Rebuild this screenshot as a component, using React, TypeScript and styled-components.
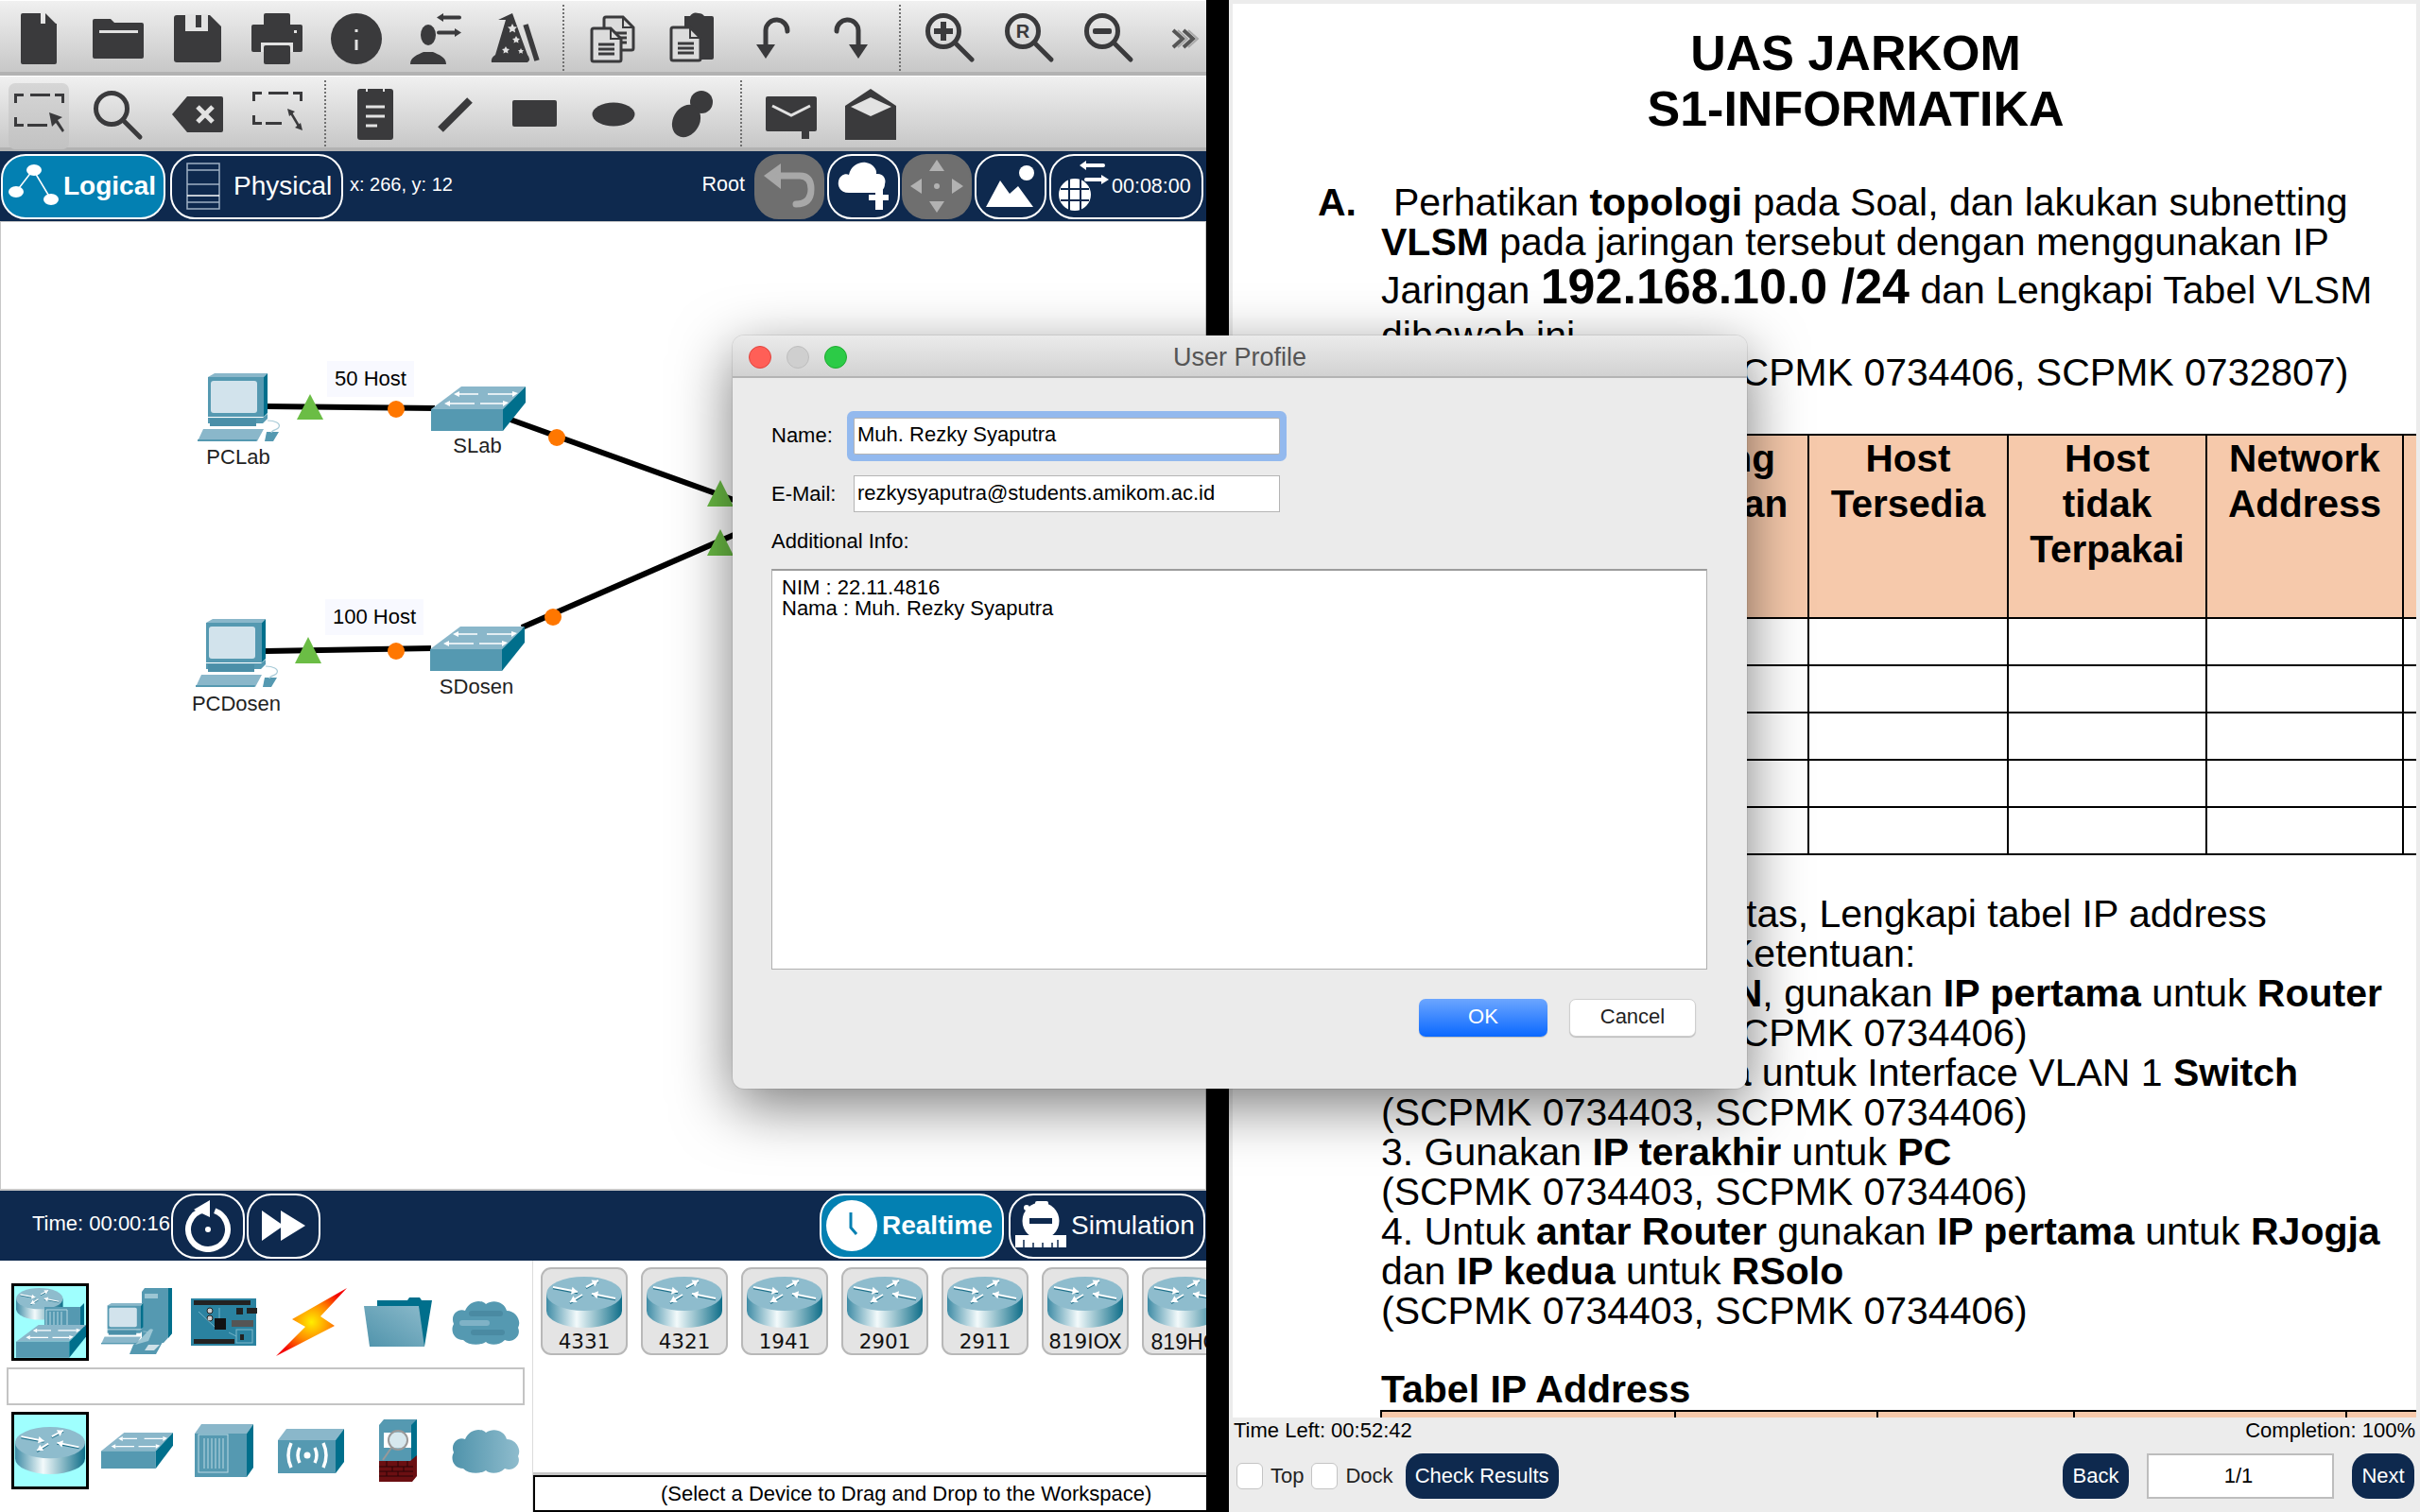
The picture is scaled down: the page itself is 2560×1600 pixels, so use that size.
import React from 'react';
import styled, { createGlobalStyle } from 'styled-components';

const INK = '#3a3a3c';
const PALE = '#e2e2e2';
const NAVY = '#0e294e';
const ACTIVE = '#0380b2';
const TEAL_TOP = '#8ab7ca';
const TEAL_FRONT = '#5599b1';
const TEAL_SIDE = '#006f8c';

const GlobalStyle = createGlobalStyle`
  html, body {
    margin: 0;
    padding: 0;
    background: #000;
    overflow: hidden;
  }
  * { box-sizing: border-box; }
  body {
    font-family: "Liberation Sans", Arial, sans-serif;
  }
`;

const Screen = styled.div`
  position: relative;
  width: 2560px;
  height: 1600px;
  display: grid;
  grid-template-columns: 1276px 24px 1260px;
  background: #000;
  overflow: hidden;
`;

const PacketTracer = styled.div`
  grid-column: 1;
  display: flex;
  flex-direction: column;
  height: 1600px;
  background: #fff;
`;

const SharedDefs = styled.svg`
  display: block;
  flex: none;
`;

const Toolbar = styled.div`
  height: 80px;
  flex: none;
  padding-top: 4px;
  display: flex;
  background: linear-gradient(#f0f0f0, #c7c7c7);
  border-bottom: 3px solid #b2b2b2;
  box-shadow: inset 0 -1px 0 #b2b2b2;
  border-top: 1px solid #fff;
  & > :first-child { margin-left: -1px; }
`;

const Slot = styled.div<{ $width?: number }>`
  width: ${(p) => p.$width ?? 84}px;
  flex: none;
  display: flex;
  align-items: center;
  justify-content: center;
  svg { display: block; }
`;

const Pressed = styled.div`
  width: 64px;
  height: 70px;
  margin-top: 4px;
  display: flex;
  align-items: center;
  justify-content: center;
  border-radius: 7px;
  background: linear-gradient(#d6d6d6, #c2c2c2);
`;

const Divider = styled.div`
  width: 20px;
  flex: none;
  margin-bottom: 2px;
  &::before {
    content: '';
    display: block;
    width: 0;
    height: 100%;
    margin-left: 8px;
    border-left: 2px dotted #707070;
  }
`;

const NavBar = styled.div`
  height: 74px;
  flex: none;
  display: flex;
  align-items: center;
  background: ${NAVY};
  color: #fff;
  font-size: 21.5px;
`;

const NavButton = styled.div<{ $width: number; $active?: boolean; $disabled?: boolean; $pad?: number; $gap?: number }>`
  width: ${(p) => p.$width}px;
  height: 69px;
  flex: none;
  display: flex;
  align-items: center;
  justify-content: ${(p) => (p.$pad === undefined ? 'center' : 'flex-start')};
  gap: ${(p) => p.$gap ?? 0}px;
  padding-left: ${(p) => p.$pad ?? 0}px;
  border-radius: 26px;
  border: 2px solid ${(p) => (p.$disabled ? '#6f6f6f' : '#fff')};
  background: ${(p) => (p.$disabled ? '#6f6f6f' : p.$active ? ACTIVE : 'transparent')};
  font-size: ${(p) => (p.$pad === undefined ? '21.5px' : '28px')};
  font-weight: ${(p) => (p.$active ? 700 : 400)};
  svg { display: block; flex: none; }
`;

const ClockText = styled.span`
  font-size: 21.5px;
`;

const Coords = styled.span`
  font-size: 20px;
  margin-top: -3px;
`;

const RootLabel = styled.span`
  font-size: 21.5px;
  margin-top: -3px;
`;

const TimeText = styled.span`
  font-size: 22px;
  margin-top: -4px;
`;

const Gap = styled.div<{ $w: number }>`
  width: ${(p) => p.$w}px;
  flex: none;
`;

const Grow = styled.div`
  flex: 1;
`;

const Workspace = styled.div`
  position: relative;
  flex: 1;
  background: #fff;
  border: 1px solid #c8c8c8;
  border-bottom-width: 2px;
  overflow: hidden;
`;

const Wires = styled.svg`
  position: absolute;
  left: -1px;
  top: -235px;
`;

const Caption = styled.span<{ $x: number; $y: number }>`
  position: absolute;
  left: ${(p) => p.$x - 1}px;
  top: ${(p) => p.$y - 235}px;
  transform: translate(-50%, -50%);
  font-size: 22px;
  line-height: 24px;
  color: #222;
  white-space: nowrap;
`;

const Note = styled.span<{ $x: number; $y: number; $w: number }>`
  position: absolute;
  left: ${(p) => p.$x - 1}px;
  top: ${(p) => p.$y - 235}px;
  width: ${(p) => p.$w}px;
  height: 38px;
  display: flex;
  align-items: center;
  justify-content: center;
  background: #f8f9ff;
  font-size: 22px;
  color: #000;
`;

const Tray = styled.div`
  height: 266px;
  flex: none;
  display: grid;
  grid-template-columns: 563px 713px;
  min-height: 0;
`;

const TypePanel = styled.div`
  padding-top: 24px;
`;

const TypeRow = styled.div`
  height: 82px;
  margin-left: 7px;
  display: grid;
  grid-template-columns: repeat(6, 92px);
  align-items: center;
  justify-items: center;
  svg { display: block; }
`;

const TypeCell = styled.div<{ $selected?: boolean }>`
  width: ${(p) => (p.$selected ? '82px' : 'auto')};
  height: ${(p) => (p.$selected ? '82px' : 'auto')};
  display: flex;
  align-items: center;
  justify-content: center;
  background: ${(p) => (p.$selected ? '#9ffffe' : 'transparent')};
  border: ${(p) => (p.$selected ? '3px solid #000' : '0')};
`;

const SearchBox = styled.div`
  height: 40px;
  margin: 7px 8px 7px 7px;
  border: 2px solid #c4c4c4;
  background: #fff;
`;

const ListPanel = styled.div`
  display: flex;
  flex-direction: column;
  min-width: 0;
  height: 266px;
  border-left: 1px solid #dcdcdc;
`;

const CardStrip = styled.div`
  flex: 1;
  display: flex;
  gap: 14px;
  padding: 7px 0 0 8px;
  overflow: hidden;
  border-bottom: 3px solid #c6c6c6;
`;

const Card = styled.div`
  width: 92px;
  height: 93px;
  flex: none;
  padding-top: 8px;
  display: flex;
  flex-direction: column;
  align-items: center;
  background: #e4e4e4;
  border: 2px solid #b8b8b8;
  border-radius: 11px;
  svg { display: block; flex: none; }
`;

const CardName = styled.span<{ $plain?: boolean }>`
  margin-top: 2px;
  font-family: ${(p) => (p.$plain ? '"Liberation Sans"' : '"DejaVu Sans"')}, sans-serif;
  font-size: ${(p) => (p.$plain ? '23px' : '21.5px')};
  line-height: 26px;
  color: #111;
  white-space: nowrap;
`;

const Hint = styled.div`
  height: 39px;
  flex: none;
  padding-left: 133px;
  display: flex;
  align-items: center;
  border: 2px solid #000;
  border-right: 0;
  font-size: 22px;
  color: #000;
  white-space: nowrap;
`;

const Assessment = styled.div`
  grid-column: 3;
  display: flex;
  flex-direction: column;
  height: 1600px;
  padding-top: 4px;
  background: #ececec;
`;

const Doc = styled.div`
  height: 1496px;
  flex: none;
  margin: 0 4px;
  padding: 23px 0 0 90px;
  background: #fff;
  color: #000;
  overflow: hidden;
  font-size: 41px;
  line-height: 42px;
`;

const DocTitle = styled.h1`
  margin: 0;
  padding-right: 24px;
  text-align: center;
  font-size: 52px;
  line-height: 59px;
  font-weight: 700;
`;

const TaskHead = styled.div<{ $top: number }>`
  display: flex;
  margin-top: ${(p) => p.$top}px;
  white-space: nowrap;
`;

const TaskMark = styled.b<{ $width?: number }>`
  width: ${(p) => p.$width ?? 80}px;
  flex: none;
`;

const Para = styled.div`
  margin-left: 67px;
`;

const DocLine = styled.div<{ $tall?: boolean; $top?: number }>`
  white-space: nowrap;
  line-height: ${(p) => (p.$tall ? '53px' : '42px')};
  margin-top: ${(p) => p.$top ?? 0}px;
`;

const Big = styled.b`
  font-size: 52px;
  line-height: 1;
`;

const GridTable = styled.table<{ $width: number; $top: number }>`
  table-layout: fixed;
  width: ${(p) => p.$width}px;
  margin: ${(p) => p.$top}px 0 0 66px;
  border-collapse: collapse;
  td, th {
    border: 2px solid #000;
    padding: 0;
  }
  th {
    height: 194px;
    vertical-align: top;
    background: #f6c9ab;
    font-size: 40.5px;
    line-height: 48px;
    font-weight: 700;
  }
  td { height: 50px; }
`;

const DocFooter = styled.div`
  flex: 1;
  display: flex;
  flex-direction: column;
  padding: 0 5px;
  font-size: 22px;
  color: #000;
`;

const StatusRow = styled.div`
  height: 28px;
  display: flex;
  align-items: center;
  justify-content: space-between;
`;

const ControlRow = styled.div`
  margin-top: 10px;
  display: flex;
  align-items: center;
  height: 48px;
  padding-left: 3px;
`;

const CheckBox = styled.span`
  width: 28px;
  height: 28px;
  flex: none;
  background: #fff;
  border: 1px solid #c4c4c4;
  border-radius: 6px;
`;

const CheckLabel = styled.span`
  margin: 0 8px 0 8px;
  color: #222;
`;

const PillButton = styled.div<{ $width: number }>`
  width: ${(p) => p.$width}px;
  height: 48px;
  flex: none;
  display: flex;
  align-items: center;
  justify-content: center;
  border-radius: 18px;
  background: ${NAVY};
  color: #fff;
`;

const PageBox = styled.div`
  width: 198px;
  height: 48px;
  flex: none;
  margin: 0 19px;
  padding-right: 4px;
  display: flex;
  align-items: center;
  justify-content: center;
  background: #fff;
  border: 2px solid #bdbdbd;
`;

const Dialog = styled.section`
  position: absolute;
  left: 775px;
  top: 355px;
  width: 1073px;
  height: 797px;
  display: flex;
  flex-direction: column;
  background: #ebebeb;
  border-radius: 12px;
  box-shadow: 0 18px 62px rgba(0, 0, 0, 0.52), 0 0 0 1px rgba(0, 0, 0, 0.08);
  font-size: 22px;
  color: #000;
  overflow: hidden;
`;

const TitleBar = styled.header`
  position: relative;
  height: 45px;
  flex: none;
  padding-top: 3px;
  display: flex;
  align-items: center;
  justify-content: center;
  background: linear-gradient(#ebebeb, #d2d2d2);
  border-bottom: 2px solid #b4b4b4;
  color: #555;
  font-size: 27px;
`;

const Lights = styled.div`
  position: absolute;
  left: 17px;
  top: 11px;
  display: flex;
  gap: 16px;
`;

const Light = styled.span<{ $color: string; $edge: string }>`
  width: 24px;
  height: 24px;
  border-radius: 50%;
  background: ${(p) => p.$color};
  border: 1px solid ${(p) => p.$edge};
`;

const DialogBody = styled.div`
  flex: 1;
  padding: 34px 42px 0 41px;
  display: flex;
  flex-direction: column;
`;

const FieldRow = styled.div<{ $height: number; $top?: number }>`
  height: ${(p) => p.$height}px;
  margin-top: ${(p) => p.$top ?? 0}px;
  display: flex;
  align-items: center;
`;

const FieldLabel = styled.span`
  width: 87px;
  flex: none;
`;

const Input = styled.div<{ $focused?: boolean }>`
  width: 451px;
  height: 39px;
  padding: 0 0 2px 3px;
  display: flex;
  align-items: center;
  background: #fff;
  border: 1px solid #b4b4b4;
  white-space: nowrap;
  box-shadow: ${(p) => (p.$focused ? '0 0 0 7px #93b9ee' : 'none')};
  border-radius: ${(p) => (p.$focused ? '2px' : '0')};
`;

const InfoLabel = styled.div`
  margin-top: 19px;
  line-height: 24px;
`;

const TextArea = styled.div`
  height: 424px;
  margin-top: 17px;
  padding: 7px 10px;
  background: #fff;
  border: 1px solid #b0b0b0;
  border-top: 2px solid #9c9c9c;
  line-height: 22px;
`;

const DialogActions = styled.div`
  margin-top: 31px;
  padding-right: 12px;
  display: flex;
  justify-content: flex-end;
  gap: 23px;
`;

const DialogButton = styled.div<{ $primary?: boolean }>`
  width: ${(p) => (p.$primary ? '136px' : '134px')};
  height: 40px;
  padding-bottom: 3px;
  display: flex;
  align-items: center;
  justify-content: center;
  border-radius: 7px;
  background: ${(p) => (p.$primary ? 'linear-gradient(#6ca6ff, #0a68ff)' : '#fff')};
  color: ${(p) => (p.$primary ? '#fff' : '#222')};
  border: ${(p) => (p.$primary ? '0' : '1px solid #cfcfcf')};
  box-shadow: 0 1px 1px rgba(0, 0, 0, 0.2);
`;

/* toolbar glyphs: 60x60 box centred in each 84px slot */
const G = ({ children }: { children: React.ReactNode }) => (
  <svg width="60" height="60" viewBox="0 0 60 60" fill={INK}>{children}</svg>
);

const lens = (cx = 23, cy = 22) => (
  <>
    <circle cx={cx} cy={cy} r="16.5" fill="none" stroke={INK} strokeWidth="5" />
    <path d={`M${cx + 12} ${cy + 12} L${cx + 30} ${cy + 30}`} stroke={INK} strokeWidth="5" strokeLinecap="round" />
  </>
);

const sheet = (x: number, y: number) => (
  <g transform={`translate(${x} ${y})`}>
    <path d="M2 0H20L31 11V33a2 2 0 0 1-2 2H2a2 2 0 0 1-2-2V2a2 2 0 0 1 2-2z" fill="#dcdcdc" stroke={INK} strokeWidth="3" />
    <path d="M20 1V11H30" fill="none" stroke={INK} strokeWidth="2" />
    <path d="M7 17H24M7 22H24M7 27H24" stroke={INK} strokeWidth="3" />
  </g>
);

const corners = (
  <path d="M4 6H14V9H7V16H4zM21 6H42V9H21zM47 6H57V16H54V9H47zM4 31H7V38H14V41H4zM18 38H39V41H18z" />
);

const toolbarOne: React.ReactNode[][] = [
  [
    <G key="new"><path d="M13 3H32V14H49V55a2 2 0 0 1-2 2H13a2 2 0 0 1-2-2V5a2 2 0 0 1 2-2z" /><path d="M37 3L48 14H37z" /></G>,
    <G key="open"><path d="M5 9H22L26 13H55a2 2 0 0 1 2 2V49a2 2 0 0 1-2 2H5a2 2 0 0 1-2-2V11a2 2 0 0 1 2-2z" /><rect x="10" y="21" width="41" height="3" fill={PALE} /></G>,
    <G key="save"><path d="M8 5H43L55 17V52a3 3 0 0 1-3 3H8a3 3 0 0 1-3-3V8a3 3 0 0 1 3-3z" /><rect x="17" y="4" width="24" height="18" fill={PALE} /><rect x="28" y="5" width="6" height="13" /></G>,
    <G key="print"><rect x="16" y="3" width="28" height="20" rx="2" /><rect x="3" y="15" width="54" height="29" rx="2" /><rect x="13" y="34" width="34" height="10" fill={PALE} /><rect x="16" y="37" width="28" height="20" rx="2" /><rect x="48" y="21" width="3" height="3" fill={PALE} /></G>,
    <G key="info"><circle cx="30" cy="30" r="27" /><rect x="28.5" y="20" width="3" height="3" fill={PALE} /><rect x="28.5" y="31" width="3" height="11" fill={PALE} /></G>,
    <G key="profile"><ellipse cx="22" cy="26" rx="8" ry="11" /><path d="M3 57C3 49 11 47 17 44H27C33 47 41 49 41 57z" /><rect x="36" y="5.5" width="21" height="4" rx="2" /><path d="M31 7.5L38 3V12z" /><rect x="31" y="21.5" width="21" height="4" rx="2" /><path d="M57 23.5L50 19V28z" /></G>,
    <G key="wizard"><path d="M27 3L12 10L20 10L9 47Q4 50 5 55H43Q47 52 43 47z" /><path d="M41 15L53 53" stroke={INK} strokeWidth="5.5" /><path d="M27 14l1.6 3.2 3.4.4-2.5 2.4.6 3.4-3.1-1.6-3.1 1.6.6-3.4-2.5-2.4 3.4-.4zM31 27l1.3 2.6 2.7.3-2 2 .5 2.7-2.5-1.3-2.5 1.3.5-2.7-2-2 2.7-.3zM20 38l1.3 2.6 2.7.3-2 2 .5 2.7-2.5-1.3-2.5 1.3.5-2.7-2-2 2.7-.3zM36 40l1 2 2 .3-1.5 1.4.4 2-1.9-1-1.9 1 .4-2-1.5-1.4 2-.3z" fill={PALE} /></G>,
  ],
  [
    <G key="copy">{sheet(20, 7)}{sheet(7, 19)}</G>,
    <G key="paste"><path d="M21 6H27Q30 1 36 3Q40 3 42 6H50a2 2 0 0 1 2 2V50a2 2 0 0 1-2 2H21z" />{sheet(7, 18)}</G>,
    <G key="undo"><path d="M23 38V21a11.5 11.5 0 0 1 23 1" fill="none" stroke={INK} strokeWidth="5" strokeLinecap="round" /><path d="M13 36H33L23 51z" /></G>,
    <G key="redo"><path d="M37 38V21a11.5 11.5 0 0 0-23 1" fill="none" stroke={INK} strokeWidth="5" strokeLinecap="round" /><path d="M27 36H47L37 51z" /></G>,
  ],
  [
    <G key="zin">{lens()}<path d="M20 12H26V19H33V25H26V32H20V25H13V19H20z" /></G>,
    <G key="zreset">{lens()}<text x="23" y="29" textAnchor="middle" fontFamily="Liberation Sans" fontWeight="700" fontSize="20">R</text></G>,
    <G key="zout">{lens()}<rect x="13" y="19" width="20" height="6" rx="2" /></G>,
  ],
];

const toolbarTwo: React.ReactNode[][] = [
  [
    <Pressed key="select"><G>{corners}<path d="M41 26L55 31L50 34L57 45L55 47L48 37L44 41z" /></G></Pressed>,
    <G key="inspect">{lens(23, 24)}</G>,
    <G key="delete"><path d="M3 30L19 11H55a2 2 0 0 1 2 2V47a2 2 0 0 1-2 2H19z" /><path d="M30 22L46 38M46 22L30 38" stroke={PALE} strokeWidth="5" /></G>,
    <G key="resize"><path d="M4 6H14V9H7V16H4zM21 6H42V9H21zM47 6H57V16H54V9H47zM4 31H7V38H14V41H4zM18 38H35V41H18z" /><path d="M44 27L54 44" stroke={INK} strokeWidth="2.5" /><path d="M41 24L49 27L43 32zM57 47L49 44L55 39z" /></G>,
  ],
  [
    <G key="note"><rect x="11" y="3" width="38" height="54" rx="3" /><path d="M20 3h2v3h-2zM38 3h2v3h-2z" fill={PALE} /><path d="M20 20.5H40V23.5H20zM20 30.5H40V33.5H20zM20 40.5H32V43.5H20z" fill={PALE} /></G>,
    <G key="line"><path d="M15 46L46 15" stroke={INK} strokeWidth="8" /></G>,
    <G key="rect"><rect x="7" y="15" width="47" height="28" rx="2" /></G>,
    <G key="ellipse"><ellipse cx="30" cy="30" rx="22.5" ry="12.5" /></G>,
    <G key="free"><circle cx="39" cy="17" r="12" /><ellipse cx="23" cy="37" rx="14" ry="18" transform="rotate(30 23 37)" /></G>,
  ],
  [
    <G key="mail"><rect x="3" y="11" width="54" height="37" rx="2" /><rect x="41" y="46" width="8" height="10" /><path d="M10 21L30 31L50 21" fill="none" stroke={PALE} strokeWidth="3" /></G>,
    <G key="mailopen"><path d="M3 21L30 3L57 21V57H3z" /><path d="M9 22L30 12L52 22L30 32z" fill={PALE} /></G>,
  ],
];

const ToolRow = ({ groups, more }: { groups: React.ReactNode[][]; more?: boolean }) => (
  <Toolbar>
    {groups.map((group, i) => (
      <React.Fragment key={i}>
        {i > 0 && <Divider />}
        {group.map((icon, j) => <Slot key={j}>{icon}</Slot>)}
      </React.Fragment>
    ))}
    {more && (
      <Slot $width={78}>
        <svg width="30" height="22" viewBox="0 0 30 22" fill="none" stroke="#555" strokeWidth="4">
          <path d="M2 2L12 11L2 20M13 2L23 11L13 20" />
          <path d="M7 2L17 11L7 20M18 2L28 11L18 20" stroke="#aaa" strokeWidth="2" />
        </svg>
      </Slot>
    )}
  </Toolbar>
);

const Pointer = ({ x1, y1, x2, y2, w = 2, size = 4 }: { x1: number; y1: number; x2: number; y2: number; w?: number; size?: number }) => {
  const a = Math.atan2(y2 - y1, x2 - x1);
  const px = (d: number, s: number) => x2 - Math.cos(a) * d - Math.sin(a) * s;
  const py = (d: number, s: number) => y2 - Math.sin(a) * d + Math.cos(a) * s;
  const head = `${x2},${y2} ${px(size * 1.6, size)},${py(size * 1.6, size)} ${px(size * 1.6, -size)},${py(size * 1.6, -size)}`;
  return (
    <>
      <line x1={x1} y1={y1 + 1.2} x2={x2} y2={y2 + 1.2} stroke="#1d6f89" strokeWidth={w} />
      <line x1={x1} y1={y1} x2={x2} y2={y2} stroke="#fff" strokeWidth={w} />
      <polygon points={head} fill="#fff" />
    </>
  );
};

/* 80x54 */
const RouterShape = () => (
  <g>
    <path d="M0 18V36A40 18 0 0 0 80 36V18z" fill="url(#routerSide)" />
    <ellipse cx="40" cy="18" rx="40" ry="18" fill="#8ebccd" />
    <Pointer x1={7} y1={11} x2={33} y2={16} />
    <Pointer x1={42} y1={11} x2={55} y2={4} />
    <Pointer x1={73} y1={23} x2={48} y2={18} />
    <Pointer x1={38} y1={19} x2={25} y2={27} />
  </g>
);

/* 100x47 */
const SwitchShape = () => (
  <g>
    <path d="M0 24L32 0H100L76 24z" fill={TEAL_TOP} />
    <rect x="0" y="24" width="76" height="23" fill={TEAL_FRONT} />
    <path d="M76 24L100 0V17L76 47z" fill={TEAL_SIDE} />
    <path d="M30 8H50M60 8H86M20 18H46M52 18H76" stroke="#fff" strokeWidth="1.5" />
    <path d="M30 5V11L24 8zM86 5V11L92 7zM20 15V21L14 18zM76 15V21L82 17z" fill="#fff" />
  </g>
);

/* 88x72 */
const PcShape = () => (
  <g>
    <path d="M11 4L18 0H74L70 4z" fill={TEAL_TOP} />
    <rect x="11" y="4" width="59" height="42" fill={TEAL_FRONT} />
    <path d="M70 4L74 0V42L70 46z" fill={TEAL_SIDE} />
    <rect x="14" y="8" width="49" height="34" rx="3" fill="#d2e3ec" />
    <path d="M11 47H69L74 43V48L69 53H11z" fill={TEAL_FRONT} />
    <path d="M13 48H62V56H13z" fill="#4b8fa8" />
    <path d="M6 59H70L63 72H0z" fill={TEAL_TOP} />
    <path d="M0 70H63L62 72H0z" fill={TEAL_FRONT} />
    <path d="M73 62H86L80 72H71z" fill={TEAL_FRONT} />
    <path d="M74 50C82 50 88 53 86 57C85 60 78 60 78 63" fill="none" stroke="#a8cbd8" strokeWidth="1.2" />
  </g>
);

const cloudPath = 'M14 44C4 44 0 34 4 27C0 18 8 10 16 13C20 3 32 0 38 6C46 0 58 4 60 13C70 13 76 24 72 31C76 40 66 48 58 44C52 50 42 50 38 46C32 50 20 50 14 44Z';

const Cable = ({ d }: { d: string }) => <path d={d} stroke="#000" strokeWidth="6" fill="none" />;
const Up = ({ x, top, bottom, fill = '#6bbd45' }: { x: number; top: number; bottom: number; fill?: string }) => (
  <polygon points={`${x},${top} ${x + 14},${bottom} ${x - 14},${bottom}`} fill={fill} />
);
const Dot = ({ x, y }: { x: number; y: number }) => <ellipse cx={x} cy={y} rx="9" ry="9" fill="#ff7700" />;

const NetworkDrawing = () => (
  <Wires width="1276" height="1270" viewBox="0 0 1276 1270">
    <Cable d="M282 430L460 432" />
    <Cable d="M281 689L456 686" />
    <Cable d="M540 444L790 534" />
    <Cable d="M552 664L790 560" />
    <g transform="translate(209 395)"><PcShape /></g>
    <g transform="translate(207 655)"><PcShape /></g>
    <g transform="translate(456 409)"><SwitchShape /></g>
    <g transform="translate(455 663)"><SwitchShape /></g>
    <Up x={328} top={417} bottom={444} />
    <Up x={326} top={674} bottom={702} />
    <Up x={762} top={508} bottom={536} />
    <Up x={762} top={560} bottom={588} />
    <Dot x={419} y={433} />
    <Dot x={419} y={689} />
    <Dot x={589} y={463} />
    <Dot x={585} y={653} />
  </Wires>
);

const Board = () => (
  <svg width="70" height="51" viewBox="0 0 70 51">
    <rect width="69" height="50" fill="#2a82a0" />
    <rect x="3" y="2" width="60" height="5" fill="#222" />
    <rect x="3" y="43" width="43" height="5" fill="#222" />
    <rect x="25" y="21" width="12" height="12" fill="#111" />
    <rect x="48" y="10" width="7" height="7" fill="#222" />
    <rect x="59" y="10" width="11" height="6" fill="#222" />
    <rect x="43" y="23" width="23" height="7" fill="#555" />
    <circle cx="20" cy="13" r="3" fill="#ccc" stroke="#222" /><circle cx="20" cy="21" r="3" fill="#ccc" stroke="#222" />
    <rect x="48" y="33" width="17" height="14" fill="none" stroke="#7fb9cc" />
    <rect x="52" y="38" width="4" height="6" fill="#222" />
    <path d="M8 14L25 30M30 10V21M40 36L48 40" stroke="#74b4c9" />
  </svg>
);

const categories: React.ReactNode[] = [
  <svg key="net" width="76" height="76" viewBox="0 0 76 76">
    <g transform="translate(2 2) scale(.62)"><RouterShape /></g>
    <path d="M32 22H70V52H32z" fill={TEAL_FRONT} />
    <path d="M70 22L74 18V48L70 52z" fill={TEAL_SIDE} />
    <path d="M34 25H56V46H34z" fill="none" stroke="#b8d8e2" />
    <path d="M38 27V44M42 27V44M46 27V44M50 27V44" stroke="#b8d8e2" />
    <g transform="translate(2 41) scale(.74)"><SwitchShape /></g>
  </svg>,
  <svg key="end" width="76" height="76" viewBox="0 0 76 76">
    <path d="M43 6L46 2H75V50L66 60H43z" fill={TEAL_FRONT} />
    <path d="M71 2H75V50L71 55z" fill={TEAL_SIDE} />
    <rect x="46" y="8" width="14" height="5" fill="#9cc6d4" />
    <g transform="translate(0 18) scale(.6)"><PcShape /></g>
    <path d="M30 72L34 62L52 50H70L58 72z" fill={TEAL_FRONT} />
    <path d="M36 62L50 47Q52 44 55 46L50 58z" fill="#9cc6d4" />
    <path d="M50 62H62L56 68H46z" fill="#cfe1e8" />
  </svg>,
  <Board key="board" />,
  <svg key="conn" width="76" height="74" viewBox="0 0 76 74">
    <polygon points="76,1 18,34 32,42 1,73 63,41 48,31" fill="url(#bolt)" />
  </svg>,
  <svg key="misc" width="73" height="53" viewBox="0 0 73 53">
    <path d="M14 3H46L48 0H59L61 3H72L64 52H14z" fill={TEAL_SIDE} />
    <path d="M0 9H58L64 52H6z" fill="url(#folderFace)" />
  </svg>,
  <svg key="multi" width="74" height="50" viewBox="0 0 74 50">
    <path d={cloudPath} fill={TEAL_FRONT} />
    <rect x="20" y="13" width="36" height="6" rx="3" fill="#4a8aa2" />
    <rect x="10" y="23" width="32" height="6" rx="3" fill="#7fb2c6" />
    <rect x="22" y="33" width="36" height="6" rx="3" fill="#4a8aa2" />
  </svg>,
];

const subCategories: React.ReactNode[] = [
  <svg key="router" width="76" height="50" viewBox="0 0 80 54"><RouterShape /></svg>,
  <svg key="switch" width="76" height="38" viewBox="0 0 100 47" preserveAspectRatio="none"><SwitchShape /></svg>,
  <svg key="hub" width="62" height="56" viewBox="0 0 62 56">
    <path d="M0 10L7 0H62L55 10z" fill={TEAL_TOP} />
    <rect y="10" width="55" height="46" fill={TEAL_FRONT} />
    <path d="M55 10L62 0V46L55 56z" fill={TEAL_SIDE} />
    <rect x="4" y="11" width="31" height="40" fill="none" stroke="#bcd9e3" />
    <path d="M10 15V47M14 15V47M18 15V47M22 15V47M26 15V47M30 15V47" stroke="#bcd9e3" />
  </svg>,
  <svg key="wifi" width="70" height="47" viewBox="0 0 70 47">
    <path d="M0 12L9 0H70L61 12z" fill={TEAL_TOP} />
    <rect y="12" width="61" height="35" fill={TEAL_FRONT} />
    <path d="M61 12L70 0V35L61 47z" fill={TEAL_SIDE} />
    <circle cx="31" cy="28" r="3.5" fill="#fff" />
    <path d="M23 20Q19 28 23 36M39 20Q43 28 39 36M14 15Q8 28 14 41M48 15Q54 28 48 41" fill="none" stroke="#fff" strokeWidth="3.5" />
  </svg>,
  <svg key="sec" width="40" height="66" viewBox="0 0 40 66">
    <path d="M0 6L5 0H40V40L34 48H0z" fill={TEAL_FRONT} />
    <path d="M34 6L40 0V40L34 48z" fill={TEAL_SIDE} />
    <rect x="5" y="14" width="29" height="16" fill="#fff" />
    <circle cx="20" cy="22" r="10" fill="#bcd9e3" fillOpacity="0.6" stroke="#999" strokeWidth="2" />
    <path d="M13 30L4 43" stroke="#999" strokeWidth="2" />
    <path d="M0 44H33L40 38V60L35 66H0z" fill="#6b0f12" />
    <path d="M0 50H36M0 55H36M0 60H36M8 44V50M20 44V50M30 44V50M14 50V55M26 50V55M8 55V60M20 55V60" stroke="#2a0506" />
  </svg>,
  <svg key="wan" width="74" height="50" viewBox="0 0 74 50"><path d={cloudPath} fill="url(#wanCloud)" /></svg>,
];

const models = ['4331', '4321', '1941', '2901', '2911', '819IOX', '819HG'];

const Logical = () => (
  <svg width="56" height="48" viewBox="0 0 56 48" fill="#fff">
    <path d="M26 8L9 30M28 8L46 38" stroke="#fff" strokeWidth="1.5" />
    <ellipse cx="28" cy="7" rx="8" ry="6" />
    <ellipse cx="9" cy="30" rx="8" ry="6" />
    <ellipse cx="46" cy="38" rx="8" ry="6" />
  </svg>
);

const Physical = () => (
  <svg width="36" height="50" viewBox="0 0 36 50" fill="none">
    <rect x="1" y="1" width="34" height="48" stroke="#9fb0c4" strokeWidth="1.5" />
    <path d="M1 8H35M1 23H35M1 42H35" stroke="#9fb0c4" strokeWidth="1.5" />
    <path d="M1 35H35" stroke="#fff" strokeWidth="1.5" />
  </svg>
);

const BackArrow = () => (
  <svg width="58" height="50" viewBox="0 0 58 50" fill="none">
    <path d="M2 14L20 1V28z" fill="#a8a8a8" />
    <path d="M18 14H40Q52 14 52 28Q52 44 36 44" stroke="#a8a8a8" strokeWidth="7" strokeLinecap="round" />
  </svg>
);

const CloudPlus = () => (
  <svg width="56" height="54" viewBox="0 0 56 54" fill="#fff">
    <path d="M12 34C2 34 0 26 1 22C2 15 9 13 12 15C14 6 22 1 30 2C38 3 42 10 41 14C48 13 52 19 50 25C50 30 46 34 40 34z" />
    <path d="M33 36H40V30H48V36H54V42H48V52H40V42H33z" />
  </svg>
);

const MovePad = () => (
  <svg width="56" height="56" viewBox="0 0 56 56" fill="#b2b2b2">
    <path d="M28 0L36 12H20zM28 56L36 44H20zM0 28L12 20V36zM56 28L44 20V36z" />
    <circle cx="28" cy="28" r="3" />
  </svg>
);

const Scenery = () => (
  <svg width="52" height="44" viewBox="0 0 52 44" fill="#fff">
    <circle cx="43" cy="8" r="8" />
    <path d="M0 44L15 16L25 30L34 22L50 44z" />
  </svg>
);

const ViewportGlyph = () => (
  <svg width="54" height="54" viewBox="0 0 54 54" fill="none">
    <circle cx="18" cy="36" r="17" fill="#fff" />
    <path d="M3 30H33M3 42H33M12 20V52M24 20V52" stroke={NAVY} strokeWidth="2" />
    <rect x="28" y="3" width="22" height="4" rx="2" fill="#fff" />
    <path d="M23 5L30 0V10z" fill="#fff" />
    <rect x="28" y="18" width="20" height="4" rx="2" fill="#fff" />
    <path d="M54 20L46 15V25z" fill="#fff" />
  </svg>
);

const ClockFace = () => (
  <svg width="54" height="54" viewBox="0 0 54 54">
    <circle cx="27" cy="27" r="27" fill="#fff" />
    <path d="M26 13V29L32 36" stroke={ACTIVE} strokeWidth="3" fill="none" />
  </svg>
);

const Stopwatch = () => (
  <svg width="54" height="52" viewBox="0 0 54 52" fill="#fff">
    <rect x="21" y="0" width="14" height="6" rx="2" />
    <circle cx="27" cy="21" r="19.5" />
    <circle cx="12" cy="7" r="3" />
    <rect x="15" y="18" width="24" height="6" fill={NAVY} />
    <rect x="0" y="36" width="54" height="13" />
    <path d="M9 41V49M19 44V49M29 44V49M39 44V49M45 41V49" stroke={NAVY} strokeWidth="1.5" />
  </svg>
);

const Rewind = () => (
  <svg width="52" height="56" viewBox="0 0 52 56" fill="none">
    <circle cx="26" cy="32" r="21" stroke="#fff" strokeWidth="6" strokeDasharray="120 12" transform="rotate(-70 26 32)" />
    <path d="M28 1V19L11 11z" fill="#fff" />
    <circle cx="26" cy="32" r="3" fill="#fff" />
  </svg>
);

const Forward = () => (
  <svg width="48" height="34" viewBox="0 0 48 34" fill="#fff">
    <path d="M1 1L24 17L1 33zM21 1L47 17L21 33z" />
  </svg>
);

export default function App() {
  return (
    <Screen>
      <GlobalStyle />
      <PacketTracer>
        <SharedDefs width="0" height="0">
          <defs>
            <linearGradient id="routerSide" x1="0" x2="1" y1="0" y2="0">
              <stop offset="0" stopColor="#3e8ba5" />
              <stop offset="0.4" stopColor="#f3fafb" />
              <stop offset="1" stopColor="#0f6e89" />
            </linearGradient>
            <radialGradient id="bolt" cx="0.5" cy="0.5" r="0.55">
              <stop offset="0" stopColor="#ffee00" />
              <stop offset="0.5" stopColor="#ff8a00" />
              <stop offset="1" stopColor="#f40000" />
            </radialGradient>
            <linearGradient id="folderFace" x1="0" x2="1" y1="1" y2="0">
              <stop offset="0" stopColor="#4f93ab" />
              <stop offset="1" stopColor="#8ab9ca" />
            </linearGradient>
            <linearGradient id="wanCloud" x1="0" x2="1" y1="0" y2="0">
              <stop offset="0" stopColor="#4f93ab" />
              <stop offset="1" stopColor="#8fbccd" />
            </linearGradient>
          </defs>
        </SharedDefs>
        <ToolRow groups={toolbarOne} more />
        <ToolRow groups={toolbarTwo} />
        <NavBar>
          <Gap $w={1} />
          <NavButton $width={174} $active $pad={5} $gap={3}><Logical />Logical</NavButton>
          <Gap $w={5} />
          <NavButton $width={183} $pad={15} $gap={14}><Physical />Physical</NavButton>
          <Gap $w={7} />
          <Coords>x: 266, y: 12</Coords>
          <Grow />
          <RootLabel>Root</RootLabel>
          <Gap $w={10} />
          <NavButton $width={74} $disabled><BackArrow /></NavButton>
          <Gap $w={3} />
          <NavButton $width={77}><CloudPlus /></NavButton>
          <Gap $w={2} />
          <NavButton $width={74} $disabled><MovePad /></NavButton>
          <Gap $w={3} />
          <NavButton $width={76}><Scenery /></NavButton>
          <Gap $w={3} />
          <NavButton $width={163} $pad={7} $gap={3}><ViewportGlyph /><ClockText>00:08:00</ClockText></NavButton>
          <Gap $w={3} />
        </NavBar>
        <Workspace>
          <NetworkDrawing />
          <Note $x={346} $y={382} $w={92}>50 Host</Note>
          <Note $x={344} $y={634} $w={104}>100 Host</Note>
          <Caption $x={252} $y={484}>PCLab</Caption>
          <Caption $x={505} $y={472}>SLab</Caption>
          <Caption $x={250} $y={745}>PCDosen</Caption>
          <Caption $x={504} $y={727}>SDosen</Caption>
        </Workspace>
        <NavBar>
          <Gap $w={34} />
          <TimeText>Time: 00:00:16</TimeText>
          <Gap $w={1} />
          <NavButton $width={78}><Rewind /></NavButton>
          <Gap $w={2} />
          <NavButton $width={78}><Forward /></NavButton>
          <Grow />
          <NavButton $width={195} $active $pad={5} $gap={5}><ClockFace />Realtime</NavButton>
          <Gap $w={5} />
          <NavButton $width={208} $pad={5} $gap={5}><Stopwatch />Simulation</NavButton>
          <Gap $w={1} />
        </NavBar>
        <Tray>
          <TypePanel>
            <TypeRow>
              {categories.map((icon, i) => (
                <TypeCell key={i} $selected={i === 0}>{icon}</TypeCell>
              ))}
            </TypeRow>
            <SearchBox />
            <TypeRow>
              {subCategories.map((icon, i) => (
                <TypeCell key={i} $selected={i === 0}>{icon}</TypeCell>
              ))}
            </TypeRow>
          </TypePanel>
          <ListPanel>
            <CardStrip>
              {models.map((name) => (
                <Card key={name}>
                  <svg width="80" height="54" viewBox="0 0 80 54"><RouterShape /></svg>
                  <CardName $plain={name === '819HG'}>{name}</CardName>
                </Card>
              ))}
            </CardStrip>
            <Hint>(Select a Device to Drag and Drop to the Workspace)</Hint>
          </ListPanel>
        </Tray>
      </PacketTracer>

      <Assessment>
        <Doc>
          <DocTitle>UAS JARKOM<br />S1-INFORMATIKA</DocTitle>
          <TaskHead $top={48}>
            <TaskMark>A.</TaskMark>
            <span>Perhatikan <b>topologi</b> pada Soal, dan lakukan subnetting</span>
          </TaskHead>
          <Para>
            <DocLine><b>VLSM</b> pada jaringan tersebut dengan menggunakan IP</DocLine>
            <DocLine $tall>Jaringan <Big>192.168.10.0 /24</Big> dan Lengkapi Tabel VLSM</DocLine>
            <DocLine>dibawah ini</DocLine>
            <DocLine $top={-3}>(SCPMK 0734403, SCPMK 0734406, SCPMK 0732807)</DocLine>
          </Para>
          <GridTable $width={1141} $top={44}>
            <colgroup>
              <col width="186" /><col width="266" /><col width="211" /><col width="210" /><col width="208" /><col width="60" />
            </colgroup>
            <thead>
              <tr>
                <th>Subnet</th>
                <th>Host yang<br />Dibutuhkan</th>
                <th>Host<br />Tersedia</th>
                <th>Host<br />tidak<br />Terpakai</th>
                <th>Network<br />Address</th>
                <th />
              </tr>
            </thead>
            <tbody>
              {[0, 1, 2, 3, 4].map((row) => (
                <tr key={row}><td /><td /><td /><td /><td /><td /></tr>
              ))}
            </tbody>
          </GridTable>
          <TaskHead $top={41}>
            <TaskMark $width={77}>B.</TaskMark>
            <span>Dari tabel VLSM di atas, Lengkapi tabel IP address</span>
          </TaskHead>
          <Para>
            <DocLine>host sesuai dengan Ketentuan:</DocLine>
            <DocLine>1. Untuk Setiap <b>VLAN</b>, gunakan <b>IP pertama</b> untuk <b>Router</b></DocLine>
            <DocLine>(SCPMK 0734403, SCPMK 0734406)</DocLine>
            <DocLine>2. Gunakan <b>IP kedua</b> untuk Interface VLAN 1 <b>Switch</b></DocLine>
            <DocLine>(SCPMK 0734403, SCPMK 0734406)</DocLine>
            <DocLine>3. Gunakan <b>IP terakhir</b> untuk <b>PC</b></DocLine>
            <DocLine>(SCPMK 0734403, SCPMK 0734406)</DocLine>
            <DocLine>4. Untuk <b>antar Router</b> gunakan <b>IP pertama</b> untuk <b>RJogja</b></DocLine>
            <DocLine>dan <b>IP kedua</b> untuk <b>RSolo</b></DocLine>
            <DocLine>(SCPMK 0734403, SCPMK 0734406)</DocLine>
            <DocLine $top={41}><b>Tabel IP Address</b></DocLine>
          </Para>
          <GridTable $width={1141} $top={1}>
            <colgroup>
              <col width="311" /><col width="214" /><col width="208" /><col width="288" /><col width="120" />
            </colgroup>
            <thead>
              <tr><th /><th /><th /><th /><th /></tr>
            </thead>
          </GridTable>
        </Doc>
        <DocFooter>
          <StatusRow>
            <span>Time Left: 00:52:42</span>
            <span>Completion: 100%</span>
          </StatusRow>
          <ControlRow>
            <CheckBox />
            <CheckLabel>Top</CheckLabel>
            <CheckBox />
            <CheckLabel>Dock</CheckLabel>
            <Gap $w={5} />
            <PillButton $width={162}>Check Results</PillButton>
            <Grow />
            <PillButton $width={70}>Back</PillButton>
            <PageBox>1/1</PageBox>
            <PillButton $width={66}>Next</PillButton>
            <Gap $w={1} />
          </ControlRow>
        </DocFooter>
      </Assessment>

      <Dialog>
        <TitleBar>
          <Lights>
            <Light $color="#ff5f57" $edge="#e0443e" />
            <Light $color="#cfcfcf" $edge="#bdbdbd" />
            <Light $color="#2ccb47" $edge="#1eab2f" />
          </Lights>
          User Profile
        </TitleBar>
        <DialogBody>
          <FieldRow $height={54}>
            <FieldLabel>Name:</FieldLabel>
            <Input $focused>Muh. Rezky Syaputra</Input>
          </FieldRow>
          <FieldRow $height={39} $top={15}>
            <FieldLabel>E-Mail:</FieldLabel>
            <Input>rezkysyaputra@students.amikom.ac.id</Input>
          </FieldRow>
          <InfoLabel>Additional Info:</InfoLabel>
          <TextArea>NIM : 22.11.4816<br />Nama : Muh. Rezky Syaputra</TextArea>
          <DialogActions>
            <DialogButton $primary>OK</DialogButton>
            <DialogButton>Cancel</DialogButton>
          </DialogActions>
        </DialogBody>
      </Dialog>
    </Screen>
  );
}
